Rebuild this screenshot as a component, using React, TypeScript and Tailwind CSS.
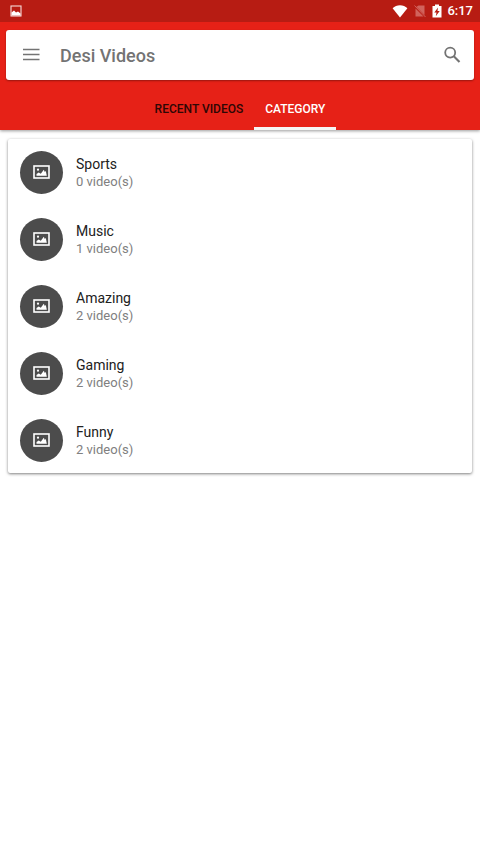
import { useState } from "react";

const categories = [
  { name: "Sports", count: 0 },
  { name: "Music", count: 1 },
  { name: "Amazing", count: 2 },
  { name: "Gaming", count: 2 },
  { name: "Funny", count: 2 },
];

const tabs = ["RECENT VIDEOS", "CATEGORY"];

const StatusBar = () => (
  <div className="flex h-[22px] items-center bg-[#b71c13] pl-[10px] pr-[7px] text-white">
    <svg className="h-3 w-3" viewBox="0 0 12 12" fill="none">
      <rect x="1" y="1" width="10" height="10" stroke="#f6dcda" strokeWidth="1.1" />
      <path d="M1.5 10.5V7.5L4 5.5L6 7.5L8 6.5L10.5 8.5V10.5Z" fill="#fff" />
    </svg>
    <div className="ml-auto flex items-center">
      <svg className="h-[14px] w-4" viewBox="0 0 16 14">
        <path d="M8 13.5L0.6 4.2C2.6 2.3 5.2 1.2 8 1.2s5.4 1.1 7.4 3Z" fill="#fff" />
      </svg>
      <svg className="ml-[6px] h-[14px] w-[12px]" viewBox="0 0 12 14" fill="none">
        <path d="M4.5 1.5H10.5V11L2.5 2.8Z" fill="#d1635c" />
        <path d="M1.500 4.500V12.500H9.500Z" fill="#d1635c" />
        <path d="M0.500 1.500L11.500 13" stroke="#d1635c" strokeWidth="1" />
      </svg>
      <svg className="ml-[6px] h-[14px] w-[10px]" viewBox="0 0 10 14">
        <path d="M3 0.500H7V2H9.500V13.500H0.500V2H3Z" fill="#fff" />
        <path d="M6 3.500L2.300 8.600H4.500L3.800 12.300L7.700 7H5.500Z" fill="#b71c13" />
      </svg>
      <span className="ml-[5px] text-[13px] leading-4 font-medium">6:17</span>
    </div>
  </div>
);

const SearchBar = () => (
  <div className="mx-[6px] mt-2 flex h-[50px] items-center rounded-[3px] bg-white pl-4 pr-3 shadow-[0_1px_2px_rgba(0,0,0,0.35)]">
    <button type="button" aria-label="Open menu" className="flex h-[18px] w-[18px] items-center justify-center">
      <svg className="h-[18px] w-[18px]" viewBox="0 0 18 18">
        <path d="M1 3.500H17.500M1 8.500H17.500M1 13.500H17.500" stroke="#737373" strokeWidth="1.600" />
      </svg>
    </button>
    <input
      type="text"
      aria-label="Search videos"
      placeholder="Desi Videos"
      className="ml-5 min-w-0 flex-1 bg-transparent pt-[2px] text-[18px] leading-6 font-medium text-[#737373] outline-none placeholder:text-[#737373]"
    />
    <button type="button" aria-label="Search" className="flex h-5 w-5 items-center justify-center">
      <svg className="h-5 w-5" viewBox="0 0 20 20" fill="none" stroke="#737373">
        <circle cx="8.200" cy="7.600" r="5" strokeWidth="1.800" />
        <path d="M11.800 11.300L17.500 17" strokeWidth="2.100" />
      </svg>
    </button>
  </div>
);

const CategoryIcon = () => (
  <span className="flex h-[43px] w-[43px] shrink-0 items-center justify-center rounded-full bg-[#4c4c4c]">
    <svg className="h-[14px] w-[17px]" viewBox="0 0 17 14">
      <rect x="1" y="1" width="15" height="12" fill="none" stroke="#fff" strokeWidth="1.600" />
      <circle cx="5" cy="4.700" r="1.100" fill="#fff" />
      <path d="M3.500 10.700V9L5.700 7.500L7.800 8.800L10.800 4.800L11.800 7L12.800 6L13.800 10.700Z" fill="#fff" />
    </svg>
  </span>
);

const App = () => {
  const [active, setActive] = useState("CATEGORY");

  return (
    <div className="min-h-screen bg-white font-[Roboto,sans-serif]">
      <header className="bg-[#e62117] shadow-[0_1px_3px_rgba(0,0,0,0.4)]">
        <StatusBar />
        <SearchBar />
        <nav className="mt-2 flex justify-center" role="tablist">
          {tabs.map((tab) => (
            <button
              key={tab}
              type="button"
              role="tab"
              aria-selected={active === tab}
              onClick={() => setActive(tab)}
              className={`h-[42px] border-b-[3px] px-[11px] pt-[2px] text-[12px] leading-4 font-medium ${
                active === tab ? "border-[#f5f5f5] text-white" : "border-transparent text-[#2e0705]"
              }`}
            >
              {tab}
            </button>
          ))}
        </nav>
      </header>

      <main className="px-2 pt-[9px]">
        <ul className="flex flex-col gap-px rounded-[2px] bg-white shadow-[0_1px_3px_rgba(0,0,0,0.5)]">
          {categories.map((category) => (
            <li key={category.name}>
              <a href="#" className="flex h-[66px] items-center gap-[13px] px-3">
                <CategoryIcon />
                <div>
                  <p className="text-[14px] leading-5 text-[#212121]">{category.name}</p>
                  <p className="text-[13px] leading-4 text-[#808080]">{category.count} video(s)</p>
                </div>
              </a>
            </li>
          ))}
        </ul>
      </main>
    </div>
  );
};

export default App;
